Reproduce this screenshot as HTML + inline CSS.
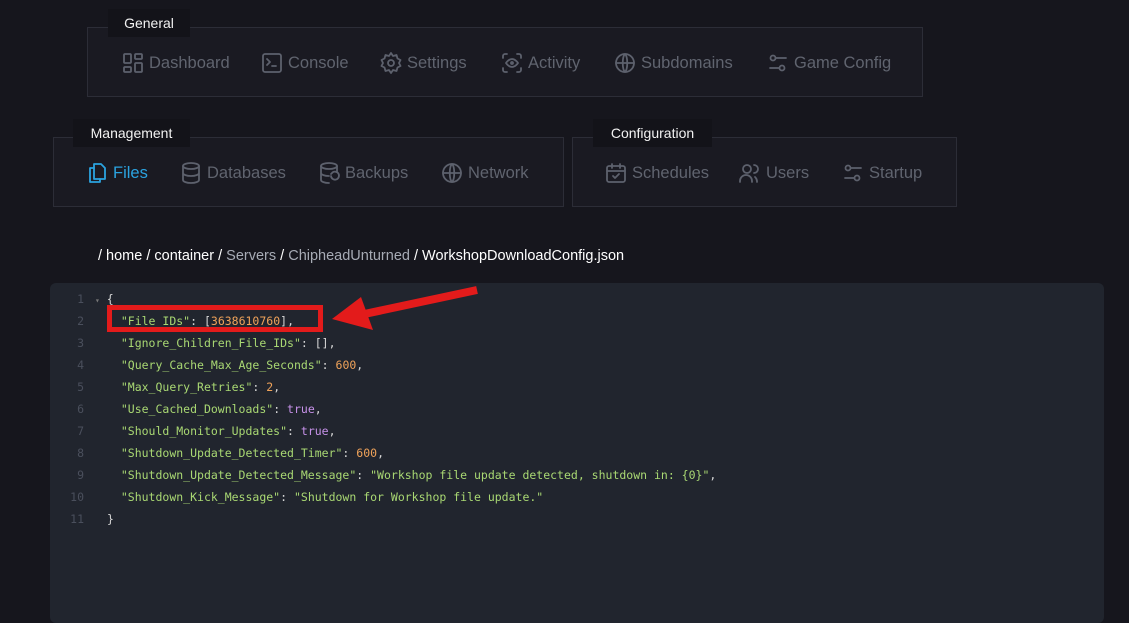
<!DOCTYPE html>
<html><head><meta charset="utf-8"><style>
*{box-sizing:border-box;margin:0;padding:0}
body{width:1129px;height:618px;background:#16161d;font-family:"Liberation Sans",sans-serif;position:relative;overflow:hidden}
.box{position:absolute;border:1px solid #2c2d37;background:#1a1a22}
.tab{position:absolute;background:#131319;color:#f2f2f2;font-size:14px;padding:6px 0 0 0;text-align:center;height:28px}
.item{position:absolute;top:23px;display:flex;align-items:center;color:#60646f;font-size:16.5px}
.item svg{width:24px;height:24px;margin:0 4px 0 -1px;stroke:#5d616d;fill:none;stroke-width:1.8;stroke-linecap:round;stroke-linejoin:round}
.crumb{position:absolute;left:98px;top:248px;font-size:14.5px;color:#fff}
.crumb .g{color:#a7abb5}
.ed{position:absolute;left:50px;top:283px;width:1054px;height:340px;background:#21252e;border-radius:6px}
.ln{position:absolute;left:0;width:34px;text-align:right;color:#4a4f5c;font:11.5px "DejaVu Sans Mono",monospace}
.cd{position:absolute;left:57px;color:#d6d6d6;font:11.5px "DejaVu Sans Mono",monospace;white-space:pre}
.s{color:#a9d873}.n{color:#f0a35a}.t{color:#c792ea}
</style></head><body>
<div class="box" style="left:87px;top:27px;width:836px;height:70px">
 <div class="item" style="left:34px"><svg viewBox="0 0 24 24"><rect x="3" y="3" width="7" height="9" rx="1"/><rect x="14" y="3" width="7" height="5" rx="1"/><rect x="14" y="12" width="7" height="9" rx="1"/><rect x="3" y="16" width="7" height="5" rx="1"/></svg>Dashboard</div>
 <div class="item" style="left:173px"><svg viewBox="0 0 24 24"><rect x="3" y="3" width="18" height="18" rx="2"/><path d="M7 8l3 3-3 3M12 15h4"/></svg>Console</div>
 <div class="item" style="left:292px"><svg viewBox="0 0 24 24"><circle cx="12" cy="12" r="3"/><path d="M12 2l2 3 3.5-1 1 3.5 3 1.5-1.5 3 1.5 3-3 1.5-1 3.5-3.5-1-2 3-2-3-3.5 1-1-3.5-3-1.5 1.5-3-1.5-3 3-1.5 1-3.5 3.5 1z"/></svg>Settings</div>
 <div class="item" style="left:413px"><svg viewBox="0 0 24 24"><path d="M3 7V5a2 2 0 0 1 2-2h2M17 3h2a2 2 0 0 1 2 2v2M21 17v2a2 2 0 0 1-2 2h-2M7 21H5a2 2 0 0 1-2-2v-2"/><path d="M6 12s2.5-4 6-4 6 4 6 4-2.5 4-6 4-6-4-6-4z"/><circle cx="12" cy="12" r="1"/></svg>Activity</div>
 <div class="item" style="left:526px"><svg viewBox="0 0 24 24"><circle cx="12" cy="12" r="9"/><path d="M3 12h18M12 3c3 3 3 15 0 18M12 3c-3 3-3 15 0 18"/></svg>Subdomains</div>
 <div class="item" style="left:679px"><svg viewBox="0 0 24 24"><circle cx="7" cy="7" r="2.5"/><circle cx="16" cy="17" r="2.5"/><path d="M10 7h10M4 17h9"/></svg>Game Config</div>
</div>
<div class="tab" style="left:108px;top:9px;width:82px">General</div>

<div class="box" style="left:53px;top:137px;width:511px;height:70px">
 <div class="item" style="left:32px;color:#2ba3e0"><svg viewBox="0 0 24 24" style="stroke:#2ba3e0"><path d="M9 3h7l4 4v11H9z"/><path d="M9 7H5v14h10v-3"/></svg>Files</div>
 <div class="item" style="left:126px"><svg viewBox="0 0 24 24"><ellipse cx="12" cy="5" rx="8" ry="3"/><path d="M4 5v14c0 1.7 3.6 3 8 3s8-1.3 8-3V5M4 12c0 1.7 3.6 3 8 3s8-1.3 8-3"/></svg>Databases</div>
 <div class="item" style="left:264px"><svg viewBox="0 0 24 24"><ellipse cx="12" cy="5" rx="8" ry="3"/><path d="M4 5v14c0 1.7 3.6 3 8 3M20 5v6M4 12c0 1.7 3.6 3 8 3"/><path d="M14 15a4 4 0 1 0 1-3l-1 1"/></svg>Backups</div>
 <div class="item" style="left:387px"><svg viewBox="0 0 24 24"><circle cx="12" cy="12" r="9"/><path d="M3 12h18M12 3c3 3 3 15 0 18M12 3c-3 3-3 15 0 18"/></svg>Network</div>
</div>
<div class="tab" style="left:73px;top:119px;width:117px">Management</div>

<div class="box" style="left:572px;top:137px;width:385px;height:70px">
 <div class="item" style="left:32px"><svg viewBox="0 0 24 24"><rect x="3" y="5" width="18" height="16" rx="2"/><path d="M3 10h18M8 3v4M16 3v4M9 15l2 2 4-4"/></svg>Schedules</div>
 <div class="item" style="left:166px"><svg viewBox="0 0 24 24"><circle cx="9" cy="8" r="4"/><path d="M2 21v-1a6 6 0 0 1 12 0v1M16 4a4 4 0 0 1 0 8M19 21v-1a6 6 0 0 0-2-4"/></svg>Users</div>
 <div class="item" style="left:269px"><svg viewBox="0 0 24 24"><circle cx="7" cy="7" r="2.5"/><circle cx="16" cy="17" r="2.5"/><path d="M10 7h10M4 17h9"/></svg>Startup</div>
</div>
<div class="tab" style="left:593px;top:119px;width:119px">Configuration</div>

<div class="crumb">/ home / container / <span class="g">Servers</span> / <span class="g">ChipheadUnturned</span> / WorkshopDownloadConfig.json</div>

<div class="ed">
 <div class="ln" style="top:9px">1</div><div class="cd" style="top:9px;left:45px"><span style="color:#777;font-size:8px">▾</span> {</div>
 <div class="ln" style="top:31px">2</div><div class="cd" style="top:31px">  <span class="s">"File_IDs"</span>: [<span class="n">3638610760</span>],</div>
 <div class="ln" style="top:53px">3</div><div class="cd" style="top:53px">  <span class="s">"Ignore_Children_File_IDs"</span>: [],</div>
 <div class="ln" style="top:75px">4</div><div class="cd" style="top:75px">  <span class="s">"Query_Cache_Max_Age_Seconds"</span>: <span class="n">600</span>,</div>
 <div class="ln" style="top:97px">5</div><div class="cd" style="top:97px">  <span class="s">"Max_Query_Retries"</span>: <span class="n">2</span>,</div>
 <div class="ln" style="top:119px">6</div><div class="cd" style="top:119px">  <span class="s">"Use_Cached_Downloads"</span>: <span class="t">true</span>,</div>
 <div class="ln" style="top:141px">7</div><div class="cd" style="top:141px">  <span class="s">"Should_Monitor_Updates"</span>: <span class="t">true</span>,</div>
 <div class="ln" style="top:163px">8</div><div class="cd" style="top:163px">  <span class="s">"Shutdown_Update_Detected_Timer"</span>: <span class="n">600</span>,</div>
 <div class="ln" style="top:185px">9</div><div class="cd" style="top:185px">  <span class="s">"Shutdown_Update_Detected_Message"</span>: <span class="s">"Workshop file update detected, shutdown in: {0}"</span>,</div>
 <div class="ln" style="top:207px">10</div><div class="cd" style="top:207px">  <span class="s">"Shutdown_Kick_Message"</span>: <span class="s">"Shutdown for Workshop file update."</span></div>
 <div class="ln" style="top:229px">11</div><div class="cd" style="top:229px">}</div>
</div>

<div style="position:absolute;left:107px;top:305px;width:216px;height:27px;border:5px solid #e31b1b"></div>
<svg style="position:absolute;left:0;top:0" width="1129" height="618">
 <line x1="477" y1="290" x2="355" y2="316" stroke="#e31b1b" stroke-width="8"/>
 <polygon points="332,319 361,297 373,330" fill="#e31b1b"/>
</svg>
</body></html>
